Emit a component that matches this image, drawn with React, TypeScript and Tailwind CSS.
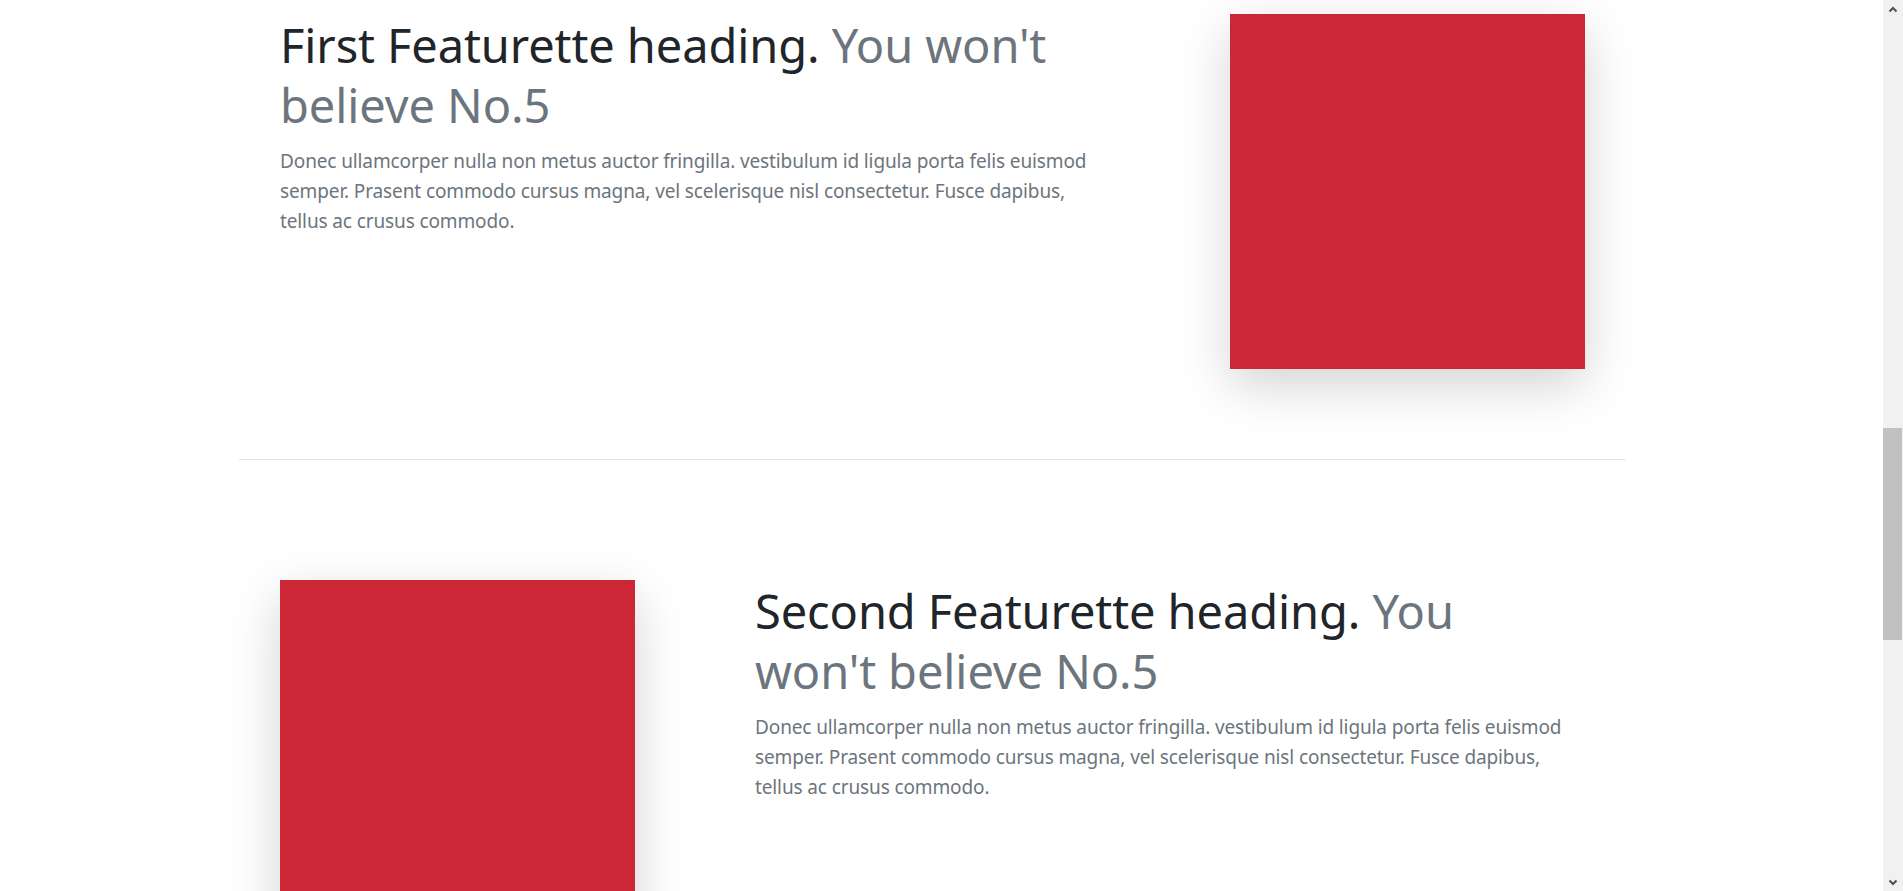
export default function App() {
  const para =
    "Donec ullamcorper nulla non metus auctor fringilla. vestibulum id ligula porta felis euismod semper. Prasent commodo cursus magna, vel scelerisque nisl consectetur. Fusce dapibus, tellus ac crusus commodo.";
  return (
    <div className="flex h-[891px] w-full overflow-hidden bg-white font-['Noto_Sans',sans-serif]">
      <main className="min-w-0 flex-1">
        <div className="ml-[239px] w-[1387px] pt-[14px]">
          <div className="grid grid-cols-[830px_475px] px-[41px]">
            <div>
              <h2 className="mb-[11px] mt-[1px] text-[47px] font-normal leading-[60px] tracking-[-0.1px] text-[#212529]">
                First Featurette heading.{" "}
                <span className="text-[#6c757d]">You won't believe No.5</span>
              </h2>
              <p className="text-[19px] leading-[30px] tracking-[-0.12px] text-[#6c757d]">{para}</p>
            </div>
            <div className="flex justify-end">
              <div className="h-[355px] w-[355px] bg-[#cb2737] shadow-[0_16px_48px_rgba(0,0,0,0.175)]" />
            </div>
          </div>

          <hr className="mb-[120px] mt-[90px] border-t border-[#e5e5e5]" />

          <div className="grid grid-cols-[475px_830px] px-[41px]">
            <div className="flex justify-start">
              <div className="h-[355px] w-[355px] bg-[#cb2737] shadow-[0_16px_48px_rgba(0,0,0,0.175)]" />
            </div>
            <div>
              <h2 className="mb-[11px] mt-[1px] text-[47px] font-normal leading-[60px] tracking-[-0.1px] text-[#212529]">
                Second Featurette heading.{" "}
                <span className="text-[#6c757d]">You won't believe No.5</span>
              </h2>
              <p className="text-[19px] leading-[30px] tracking-[-0.12px] text-[#6c757d]">{para}</p>
            </div>
          </div>
        </div>
      </main>

      <div className="flex w-[20px] shrink-0 flex-col bg-[#f1f1f1]">
        <div className="flex h-[17px] items-center justify-center">
          <svg width="10" height="8" viewBox="0 0 10 8">
            <path d="M1.5 6.5 L5 3 L8.5 6.5" fill="none" stroke="#505050" strokeWidth="2" />
          </svg>
        </div>
        <div className="h-[411px]" />
        <div className="mr-[1px] h-[212px] bg-[#c1c1c1]" />
        <div className="flex-1" />
        <div className="flex h-[17px] items-center justify-center">
          <svg width="10" height="8" viewBox="0 0 10 8">
            <path d="M1.5 1.5 L5 5 L8.5 1.5" fill="none" stroke="#505050" strokeWidth="2" />
          </svg>
        </div>
      </div>
    </div>
  );
}
